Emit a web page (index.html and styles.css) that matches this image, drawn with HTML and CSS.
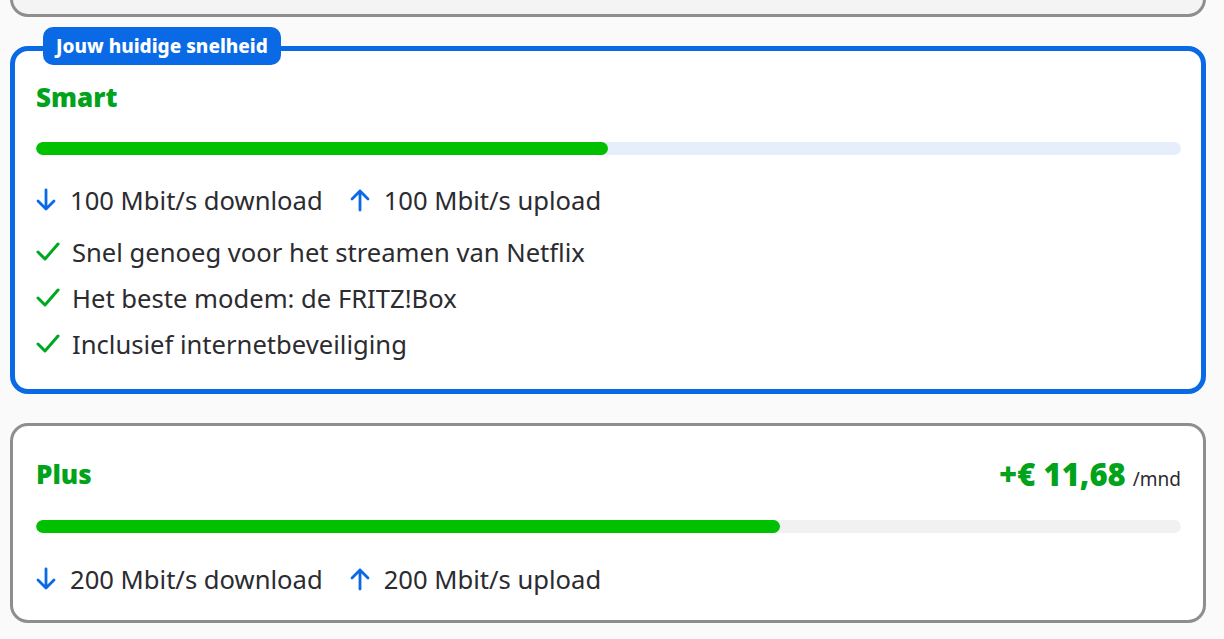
FILE: index.html
```html
<!DOCTYPE html>
<html lang="nl">
<head>
<meta charset="utf-8">
<title>Snelheid</title>
<link rel="stylesheet" href="styles.css">
</head>
<body>
<div class="page">
  <div class="card card-prev"></div>

  <section class="card card-current">
    <span class="badge">Jouw huidige snelheid</span>
    <div class="head"><h2 class="name">Smart</h2></div>
    <div class="bar bar-blue"><div class="fill" style="width:49.95%"></div></div>
    <div class="speeds">
      <span class="speed">
        <svg class="arrow" viewBox="0 0 20 24" width="20" height="24"><path d="M10 2V21M2 13L10 21L18 13" fill="none" stroke="#0a6ae6" stroke-width="2.8" stroke-linecap="round" stroke-linejoin="round"/></svg>
        100 Mbit/s download
      </span>
      <span class="speed">
        <svg class="arrow" viewBox="0 0 20 24" width="20" height="24"><path d="M10 22V3M2 11L10 3L18 11" fill="none" stroke="#0a6ae6" stroke-width="2.8" stroke-linecap="round" stroke-linejoin="round"/></svg>
        100 Mbit/s upload
      </span>
    </div>
    <ul class="usps">
      <li><svg class="check" viewBox="0 0 24 20" width="24" height="20"><path d="M2 10L9 17L22 2" fill="none" stroke="#00a820" stroke-width="3" stroke-linecap="round" stroke-linejoin="round"/></svg>Snel genoeg voor het streamen van Netflix</li>
      <li><svg class="check" viewBox="0 0 24 20" width="24" height="20"><path d="M2 10L9 17L22 2" fill="none" stroke="#00a820" stroke-width="3" stroke-linecap="round" stroke-linejoin="round"/></svg>Het beste modem: de FRITZ!Box</li>
      <li><svg class="check" viewBox="0 0 24 20" width="24" height="20"><path d="M2 10L9 17L22 2" fill="none" stroke="#00a820" stroke-width="3" stroke-linecap="round" stroke-linejoin="round"/></svg>Inclusief internetbeveiliging</li>
    </ul>
  </section>

  <section class="card card-option">
    <div class="head">
      <h2 class="name">Plus</h2>
      <div class="price"><span class="amount">+€ 11,68</span><span class="per">/mnd</span></div>
    </div>
    <div class="bar bar-grey"><div class="fill" style="width:65%"></div></div>
    <div class="speeds">
      <span class="speed">
        <svg class="arrow" viewBox="0 0 20 24" width="20" height="24"><path d="M10 2V21M2 13L10 21L18 13" fill="none" stroke="#0a6ae6" stroke-width="2.8" stroke-linecap="round" stroke-linejoin="round"/></svg>
        200 Mbit/s download
      </span>
      <span class="speed">
        <svg class="arrow" viewBox="0 0 20 24" width="20" height="24"><path d="M10 22V3M2 11L10 3L18 11" fill="none" stroke="#0a6ae6" stroke-width="2.8" stroke-linecap="round" stroke-linejoin="round"/></svg>
        200 Mbit/s upload
      </span>
    </div>
  </section>
</div>
</body>
</html>
```

FILE: styles.css
```css
* { box-sizing: border-box; }

html, body {
  margin: 0;
  padding: 0;
}

body {
  background: #fafafa;
  font-family: "Noto Sans", "Open Sans", sans-serif;
  color: #2b2b30;
  overflow: hidden;
}

.page {
  width: 1196px;
  margin-left: 10px;
  display: flex;
  flex-direction: column;
}

.card {
  position: relative;
  background: #fff;
  border-radius: 18px;
}

.card-prev {
  height: 60px;
  margin-top: -43px;
  border: 3px solid #8e8e8e;
  background: #f4f4f4;
}

.card-current {
  margin-top: 29px;
  border: 5px solid #0a6ae6;
  padding: 30px 20px 22px 21px;
}

.card-option {
  margin-top: 29px;
  border: 3px solid #8e8e8e;
  padding: 32px 22px 25px 23px;
}

.badge {
  position: absolute;
  top: -24px;
  left: 28px;
  height: 38px;
  padding: 0 13px;
  display: flex;
  align-items: center;
  background: #0a6ae6;
  color: #fff;
  font-weight: 800;
  font-size: 19px;
  border-radius: 10px;
}

.head {
  display: flex;
  align-items: center;
  justify-content: space-between;
  height: 32px;
}

.name {
  margin: 0;
  font-size: 26px;
  font-weight: 900;
  color: #00a31a;
  line-height: 32px;
}

.price {
  display: flex;
  align-items: baseline;
  gap: 7px;
}

.amount {
  font-size: 31px;
  font-weight: 900;
  color: #00a31a;
}

.per {
  font-size: 19px;
  color: #2b2b30;
}

.bar {
  margin-top: 29px;
  height: 13px;
  border-radius: 7px;
  overflow: hidden;
}

.card-option .bar { margin-top: 30px; }

.bar-blue { background: #e7eefb; }
.bar-grey { background: #f1f1f1; }

.fill {
  height: 100%;
  background: #00c000;
  border-radius: 7px;
}

.speeds {
  margin-top: 29px;
  display: flex;
  gap: 27px;
  height: 32px;
  align-items: center;
}

.card-option .speeds { margin-top: 30px; }

.speed {
  display: flex;
  align-items: center;
  gap: 14px;
  font-size: 25.6px;
  white-space: nowrap;
}

.arrow { flex: none; }

.usps {
  list-style: none;
  margin: 13px 0 0;
  padding: 0;
}

.usps li {
  display: flex;
  align-items: center;
  gap: 12px;
  height: 46px;
  font-size: 25.6px;
}

.check { flex: none; }
```
